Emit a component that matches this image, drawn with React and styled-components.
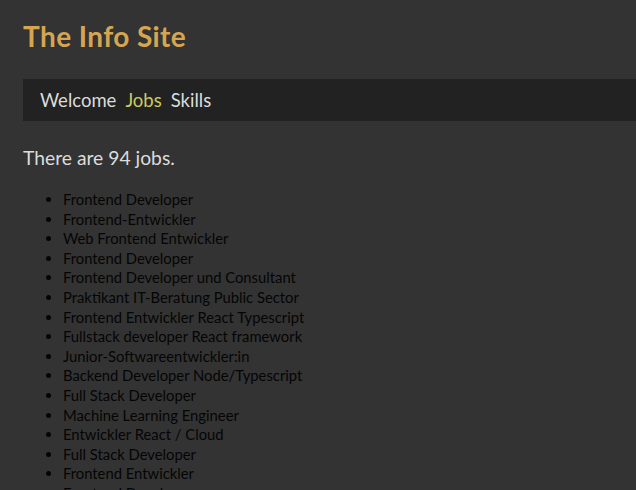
import React from 'react';
import styled, { createGlobalStyle } from 'styled-components';

const jobs = [
  'Frontend Developer',
  'Frontend-Entwickler',
  'Web Frontend Entwickler',
  'Frontend Developer',
  'Frontend Developer und Consultant',
  'Praktikant IT-Beratung Public Sector',
  'Frontend Entwickler React Typescript',
  'Fullstack developer React framework',
  'Junior-Softwareentwickler:in',
  'Backend Developer Node/Typescript',
  'Full Stack Developer',
  'Machine Learning Engineer',
  'Entwickler React / Cloud',
  'Full Stack Developer',
  'Frontend Entwickler',
  'Frontend Developer',
];

function App() {
  return (
    <>
      <GlobalStyle />
      <Page>
        <Title>The Info Site</Title>
        <Nav>
          <NavLink>Welcome</NavLink>
          <NavLink active>Jobs</NavLink>
          <NavLink>Skills</NavLink>
        </Nav>
        <Count>There are 94 jobs.</Count>
        <JobList>
          {jobs.map((job, i) => (
            <JobItem key={i}>{job}</JobItem>
          ))}
        </JobList>
      </Page>
    </>
  );
}

const GlobalStyle = createGlobalStyle`
  html, body {
    margin: 0;
    background: #333;
    font-family: Lato, "Open Sans", sans-serif;
  }
  body {
    height: 490px;
    overflow: hidden;
  }
`;

const Page = styled.div`
  padding: 0 0 0 23px;
`;

const Title = styled.h1`
  margin: 0;
  padding-top: 19px;
  height: 79px;
  box-sizing: border-box;
  font-size: 28px;
  font-weight: 700;
  letter-spacing: 0.4px;
  color: #d6a552;
`;

const Nav = styled.nav`
  display: flex;
  align-items: center;
  gap: 9px;
  height: 42px;
  padding-left: 17px;
  background: #222;
`;

const NavLink = styled.span`
  font-size: 18.5px;
  color: ${(p) => (p.active ? '#caca5e' : '#dcdcdc')};
`;

const Count = styled.p`
  margin: 25px 0 21px;
  font-size: 19.3px;
  color: #dcdcdc;
`;

const JobList = styled.ul`
  margin: 0;
  padding-left: 40px;
  color: #050505;
`;

const JobItem = styled.li`
  font-size: 14.8px;
  line-height: 19.6px;
`;

export default App;
